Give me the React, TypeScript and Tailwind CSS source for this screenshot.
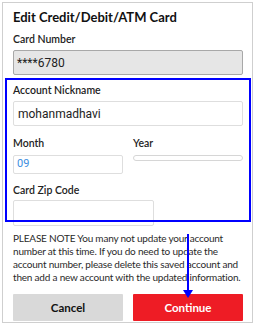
export default function App() {
  const label = "text-[10.5px] leading-[13px] font-semibold text-[#222] font-['Lato',sans-serif]";
  const note = [
    "PLEASE NOTE You many not update your account",
    "number at this time. If you do need to update the",
    "account number, please delete this saved account and",
    "then add a new account with the updated information.",
  ];
  return (
    <div className="relative w-[256px] h-[327px] bg-white overflow-hidden">
      <div className="ml-[2px] mt-[2px] w-[251px] h-[321px] border border-[#cfcfcf] pl-[10px] pr-[9px] pt-[5px] font-['Lato',sans-serif]">
        <h1 className="text-[13px] leading-[18px] font-bold text-[#111]">Edit Credit/Debit/ATM Card</h1>
        <div className={`${label} mt-[7px]`}>Card Number</div>
        <div className="mt-[4px] h-[25px] border border-[#a8a8a8] bg-[#e6e6e6] rounded-[2px] px-[3px] flex items-center font-['Roboto',sans-serif] text-[12px] text-[#222]">
          ****6780
        </div>

        <div className={`${label} mt-[9px]`}>Account Nickname</div>
        <div className="mt-[4px] h-[25px] border border-[#dedede] rounded-[2px] px-[4px] flex items-center font-['Roboto',sans-serif] text-[12px] text-[#222]">
          mohanmadhavi
        </div>

        <div className="mt-[11px] grid grid-cols-2 gap-[10px]">
          <div>
            <div className={label}>Month</div>
            <div className="mt-[5px] h-[19px] border border-[#dedede] rounded-[2px] px-[3px] flex items-center font-['Roboto',sans-serif] text-[11px] text-[#3d8ee0]">
              09
            </div>
          </div>
          <div>
            <div className={label}>Year</div>
            <div className="mt-[5px] h-[6px] border border-[#d6d6d6] rounded-[3px]" />
          </div>
        </div>

        <div className={`${label} mt-[10px]`}>Card Zip Code</div>
        <div className="mt-[3px] w-[141px] h-[26px] border border-[#dedede] rounded-[2px]" />

        <p className="mt-[6px] text-[10px] leading-[13px] tracking-[-0.2px] text-[#2a2a2a] whitespace-nowrap">
          {note.map((line) => (
            <span className="block" key={line}>{line}</span>
          ))}
        </p>

        <div className="mt-[10px] grid grid-cols-2 gap-[10px]">
          <button className="h-[27px] bg-[#d9d9d9] text-[11.5px] font-bold text-[#111] rounded-[1px]">Cancel</button>
          <button className="h-[27px] bg-[#ee1c25] text-[11.5px] font-bold text-white rounded-[1px]">Continue</button>
        </div>
      </div>

      <div className="absolute left-[5px] top-[78px] w-[246px] h-[144px] border-2 border-[#0000ff] pointer-events-none" />

      <svg className="absolute left-[182px] top-[234px]" width="12" height="66" viewBox="0 0 12 66">
        <line x1="6" y1="0" x2="6" y2="58" stroke="#0000ff" strokeWidth="2" />
        <polygon points="1,56 11,56 6,64" fill="#0000ff" />
      </svg>
    </div>
  );
}
